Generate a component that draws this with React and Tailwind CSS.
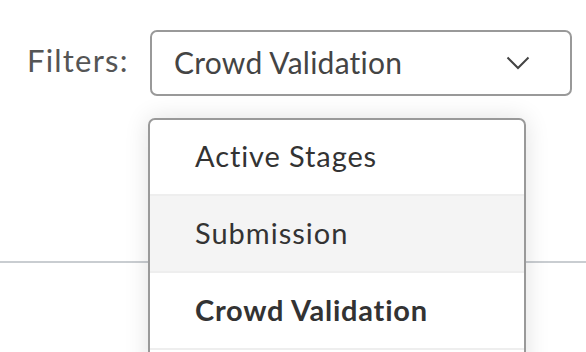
export default function App() {
  const font = { fontFamily: "Lato, 'Open Sans', sans-serif", fontVariantLigatures: "none" };
  return (
    <div className="w-[586px] h-[352px] overflow-hidden bg-white relative" style={font}>
      <div className="h-[263px] border-b-2 border-[#c9cdd1]">
        <div className="flex items-center pt-[30px]">
          <div className="w-[150px] pl-[27px] mb-[4px]">
            <span className="text-[31px] text-[#555555] leading-none tracking-[1.2px]">Filters:</span>
          </div>
          <div className="relative">
            <div className="w-[422px] h-[66px] border-2 border-[#999999] rounded-[7px] flex items-center justify-between pl-[22px] pr-[40px] bg-white">
              <span className="text-[30px] text-[#444444] leading-none tracking-[0.25px] mb-[3px]">Crowd Validation</span>
              <svg width="24" height="14" viewBox="0 0 24 14" fill="none">
                <path d="M1.5 1.5 L12 12 L22.5 1.5" stroke="#444444" strokeWidth="2" />
              </svg>
            </div>
            <div className="absolute left-[-2px] top-[88px] w-[378px] h-[260px] bg-white border-2 border-[#999999] rounded-[7px] shadow-[0_0_24px_rgba(0,0,0,0.12)] overflow-hidden z-10">
              <div className="h-[76px] flex items-center pl-[45px] border-b-2 border-[#eeeeee]">
                <span className="text-[29px] text-[#333333] leading-none tracking-[0.9px] mb-[4px]">Active Stages</span>
              </div>
              <div className="h-[77px] flex items-center pl-[45px] border-b-2 border-[#eeeeee] bg-[#f4f4f4]">
                <span className="text-[29px] text-[#333333] leading-none tracking-[1px] mb-[2px]">Submission</span>
              </div>
              <div className="h-[77px] flex items-center pl-[45px] border-b-2 border-[#eeeeee]">
                <span className="text-[29px] text-[#333333] font-bold leading-none tracking-[0.75px] mb-[2px]">Crowd Validation</span>
              </div>
              <div className="h-[75px]"></div>
            </div>
          </div>
        </div>
      </div>
    </div>
  );
}
